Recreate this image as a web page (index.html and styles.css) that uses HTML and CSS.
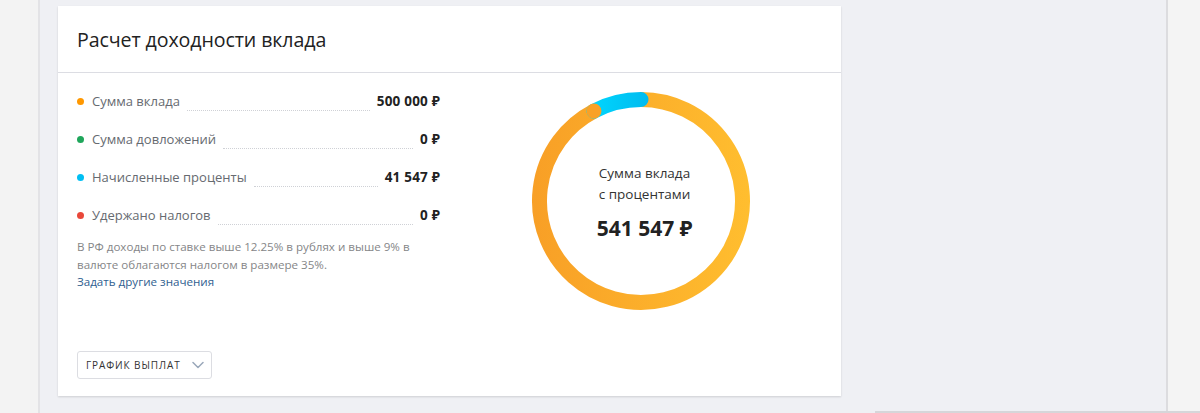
FILE: index.html
```html
<!DOCTYPE html>
<html lang="ru">
<head>
<meta charset="utf-8">
<title>Расчет доходности вклада</title>
<link rel="stylesheet" href="styles.css">
</head>
<body>
<div class="page">
  <div class="gutter gutter-left"></div>
  <main class="main">
    <section class="card">
      <header class="card-head">
        <h2 class="card-title">Расчет доходности вклада</h2>
      </header>
      <div class="card-body">
        <div class="summary">
          <ul class="rows">
            <li class="row">
              <span class="dot dot-orange"></span>
              <span class="label">Сумма вклада</span>
              <span class="leader"></span>
              <span class="value">500 000 ₽</span>
            </li>
            <li class="row">
              <span class="dot dot-green"></span>
              <span class="label">Сумма довложений</span>
              <span class="leader"></span>
              <span class="value">0 ₽</span>
            </li>
            <li class="row">
              <span class="dot dot-blue"></span>
              <span class="label">Начисленные проценты</span>
              <span class="leader"></span>
              <span class="value">41 547 ₽</span>
            </li>
            <li class="row">
              <span class="dot dot-red"></span>
              <span class="label">Удержано налогов</span>
              <span class="leader"></span>
              <span class="value">0 ₽</span>
            </li>
          </ul>
          <p class="note">В РФ доходы по ставке выше 12.25% в рублях и выше 9% в валюте облагаются налогом в размере 35%.</p>
          <a class="link" href="#">Задать другие значения</a>
          <button class="schedule-btn" type="button">
            <span>График выплат</span>
            <svg class="chevron" width="12" height="8" viewBox="0 0 12 8"><path d="M1 1.5 6 6.5 11 1.5" fill="none" stroke="#9aa8ba" stroke-width="1.5" stroke-linecap="round" stroke-linejoin="round"/></svg>
          </button>
        </div>
        <div class="chart">
          <div class="donut">
            <svg class="donut-ring" width="220" height="220" viewBox="0 0 220 220">
              <defs>
                <linearGradient id="gradMain" gradientUnits="userSpaceOnUse" x1="0" y1="0" x2="220" y2="0">
                  <stop offset="0" stop-color="#f89f26"/>
                  <stop offset="1" stop-color="#ffbe2f"/>
                </linearGradient>
                <linearGradient id="gradBlue" gradientUnits="userSpaceOnUse" x1="56" y1="0" x2="117" y2="0">
                  <stop offset="0" stop-color="#00d8ff"/>
                  <stop offset="1" stop-color="#00bbef"/>
                </linearGradient>
              </defs>
              <path d="M110 8.5 A101.5 101.5 0 1 1 62.97 20.05" fill="none" stroke="url(#gradMain)" stroke-width="15"/>
              <path d="M62.97 20.05 A101.5 101.5 0 0 1 110 8.5" fill="none" stroke="url(#gradBlue)" stroke-width="15" stroke-linecap="round"/>
              <circle cx="62.97" cy="20.05" r="7.5" fill="#f9a126"/>
            </svg>
            <div class="donut-text">
              <div class="donut-caption">Сумма вклада<br>с процентами</div>
              <div class="donut-total">541 547 ₽</div>
            </div>
          </div>
        </div>
      </div>
    </section>
  </main>
  <div class="gutter gutter-right"></div>
  <div class="scroll-track"></div>
</div>
</body>
</html>
```

FILE: styles.css
```css
html, body {
  margin: 0;
  padding: 0;
}

body {
  width: 1200px;
  height: 413px;
  overflow: hidden;
  background: #f3f3f3;
  font-family: "Open Sans", "Noto Sans", "DejaVu Sans", sans-serif;
  color: #222;
}

.page {
  position: relative;
  display: flex;
  height: 413px;
}

.gutter-left {
  width: 38px;
  background: #f3f3f3;
  border-right: 2px solid #e3e3e6;
}

.gutter-right {
  flex: 1;
  background: #f4f4f4;
  border-left: 2px solid #dcdcdf;
}

.main {
  width: 1126px;
  background: #eff0f4;
  padding: 6px 0 0 18px;
  box-sizing: border-box;
}

.scroll-track {
  position: absolute;
  left: 875px;
  right: 0;
  bottom: 0;
  height: 2px;
  background: #d6d6d9;
}

.card {
  width: 783px;
  height: 390px;
  background: #fff;
  box-shadow: 0 1px 2px rgba(0, 0, 0, 0.14);
  display: flex;
  flex-direction: column;
}

.card-head {
  height: 66px;
  border-bottom: 1px solid #dcdde3;
  display: flex;
  align-items: center;
  padding: 0 19px;
}

.card-title {
  margin: 0;
  font-size: 19.6px;
  font-weight: 400;
  color: #222;
  letter-spacing: -0.1px;
}

.card-body {
  flex: 1;
  display: flex;
}

.summary {
  width: 363px;
  margin-left: 19px;
  padding-top: 9px;
  display: flex;
  flex-direction: column;
  align-items: flex-start;
}

.rows {
  list-style: none;
  margin: 0;
  padding: 0;
  width: 100%;
}

.row {
  height: 38px;
  display: flex;
  align-items: center;
  font-size: 13px;
}

.dot {
  width: 7px;
  height: 7px;
  border-radius: 50%;
  margin-right: 8px;
  flex: none;
}

.dot-orange { background: #ff9800; }
.dot-green { background: #1fa65b; }
.dot-blue { background: #00bff3; }
.dot-red { background: #e9483a; }

.label {
  color: #666a70;
}

.leader {
  flex: 1;
  align-self: flex-end;
  margin: 0 7px 9px 7px;
  border-bottom: 1px dotted #cfd1d6;
}

.value {
  font-weight: 700;
  color: #222;
  font-size: 13.5px;
  letter-spacing: 0.2px;
}

.note {
  margin: 4px 0 0 0;
  font-size: 11.6px;
  line-height: 18px;
  color: #858688;
  width: 352px;
}

.link {
  font-size: 11.6px;
  line-height: 16px;
  color: #2f6090;
  text-decoration: none;
}

.schedule-btn {
  margin-top: 61px;
  width: 135px;
  height: 28px;
  background: #fff;
  border: 1px solid #dcdde2;
  border-radius: 3px;
  padding: 0 0 0 8px;
  display: flex;
  align-items: center;
  gap: 11px;
  font-family: inherit;
  font-size: 10px;
  font-weight: 500;
  letter-spacing: 0.9px;
  text-transform: uppercase;
  color: #333;
  cursor: pointer;
}

.chevron {
  flex: none;
}

.chart {
  flex: 1;
  padding: 18px 0 0 91px;
}

.donut {
  position: relative;
  width: 220px;
  height: 220px;
}

.donut-ring {
  display: block;
}

.donut-text {
  position: absolute;
  inset: 0;
  display: flex;
  flex-direction: column;
  align-items: center;
  justify-content: center;
  text-align: center;
  padding: 2px 0 0 7px;
}

.donut-caption {
  font-size: 13.5px;
  line-height: 21px;
  color: #333;
}

.donut-total {
  margin-top: 9px;
  font-size: 21px;
  font-weight: 700;
  color: #222;
}
```
